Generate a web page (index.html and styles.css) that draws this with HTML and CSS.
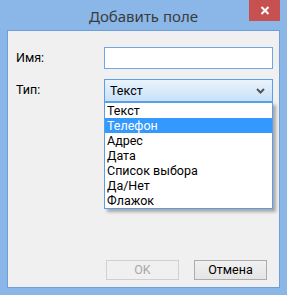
FILE: index.html
```html
<!DOCTYPE html>
<html lang="ru">
<head>
<meta charset="utf-8">
<link rel="stylesheet" href="styles.css">
</head>
<body>
<div class="window">
  <div class="titlebar">
    <span></span>
    <span class="title">Добавить поле</span>
    <span class="close"><svg width="10" height="9" viewBox="0 0 10 9"><path d="M1.5 1 L8.5 8 M8.5 1 L1.5 8" stroke="#fff" stroke-width="2"/></svg></span>
  </div>
  <div class="client">
    <div class="form">
      <label class="lbl">Имя:</label>
      <div class="textbox"></div>
      <label class="lbl">Тип:</label>
      <div class="combo">
        <div class="select">
          <span>Текст</span>
          <svg class="chev" width="9" height="6" viewBox="0 0 9 6"><path d="M1 1 L4.5 4.5 L8 1" fill="none" stroke="#555" stroke-width="2"/></svg>
        </div>
        <ul class="list">
          <li>Текст</li>
          <li class="sel">Телефон</li>
          <li>Адрес</li>
          <li>Дата</li>
          <li>Список выбора</li>
          <li>Да/Нет</li>
          <li>Флажок</li>
        </ul>
      </div>
    </div>
    <div class="buttons">
      <button class="btn disabled">OK</button>
      <button class="btn">Отмена</button>
    </div>
  </div>
</div>
</body>
</html>
```
FILE: styles.css
```css
html, body {
  margin: 0;
  padding: 0;
}
body {
  width: 287px;
  height: 295px;
  overflow: hidden;
  font-family: Roboto, "Noto Sans", sans-serif;
  font-size: 12.5px;
  color: #000;
}
.window {
  width: 287px;
  height: 295px;
  background: #8ab7e7;
  display: flex;
  flex-direction: column;
}
.titlebar {
  height: 30px;
  display: grid;
  grid-template-columns: 1fr auto 1fr;
  align-items: start;
}
.title {
  font-family: "Noto Sans", sans-serif;
  font-size: 15px;
  color: #3b3b3b;
  line-height: 30px;
  padding-top: 1px;
}
.close {
  justify-self: end;
  margin-right: 7px;
  width: 31px;
  height: 21px;
  background: #c75050;
  display: flex;
  align-items: center;
  justify-content: center;
}
.client {
  margin: 0 7px 7px 7px;
  height: 256px;
  border: 1px solid #6f9fd6;
  background: #f0f0f0;
  display: flex;
  flex-direction: column;
}
.form {
  display: grid;
  grid-template-columns: 88px 169px;
  grid-template-rows: 22px 23px;
  row-gap: 10px;
  padding: 16px 0 0 8px;
  align-items: center;
}
.lbl {
  line-height: 16px;
  padding-bottom: 1px;
}
.textbox {
  box-sizing: border-box;
  height: 22px;
  background: #fff;
  border: 1px solid #6fa6e4;
}
.combo {
  position: relative;
  height: 23px;
}
.select {
  box-sizing: border-box;
  height: 23px;
  border: 1px solid #5a9fe6;
  background: linear-gradient(#eaf4fd, #c8e1f8);
  display: flex;
  align-items: center;
  justify-content: space-between;
  padding: 0 7px 0 5px;
}
.select span {
  padding-bottom: 1px;
}
.chev {
  margin-top: 1px;
}
.list {
  position: absolute;
  top: 23px;
  left: 0;
  width: 169px;
  box-sizing: border-box;
  margin: 0;
  padding: 0;
  list-style: none;
  background: #fff;
  border: 1px solid #5a9fe6;
  box-shadow: 3px 3px 3px rgba(0, 0, 0, 0.3);
}
.list li {
  height: 15px;
  line-height: 15px;
  padding-left: 2px;
}
.list li.sel {
  background: #3399ff;
  color: #fff;
}
.buttons {
  margin-top: auto;
  display: flex;
  justify-content: flex-end;
  gap: 15px;
  padding: 0 12px 7px 0;
}
.btn {
  box-sizing: border-box;
  width: 73px;
  height: 20px;
  font-family: inherit;
  font-size: 12.5px;
  border: 1px solid #acacac;
  background: linear-gradient(#f0f0f0, #e5e5e5);
  color: #000;
  padding: 0;
  line-height: 16px;
}
.btn.disabled {
  border-color: #d0d0d0;
  background: #f0f0f0;
  color: #a8a8a8;
}
```
